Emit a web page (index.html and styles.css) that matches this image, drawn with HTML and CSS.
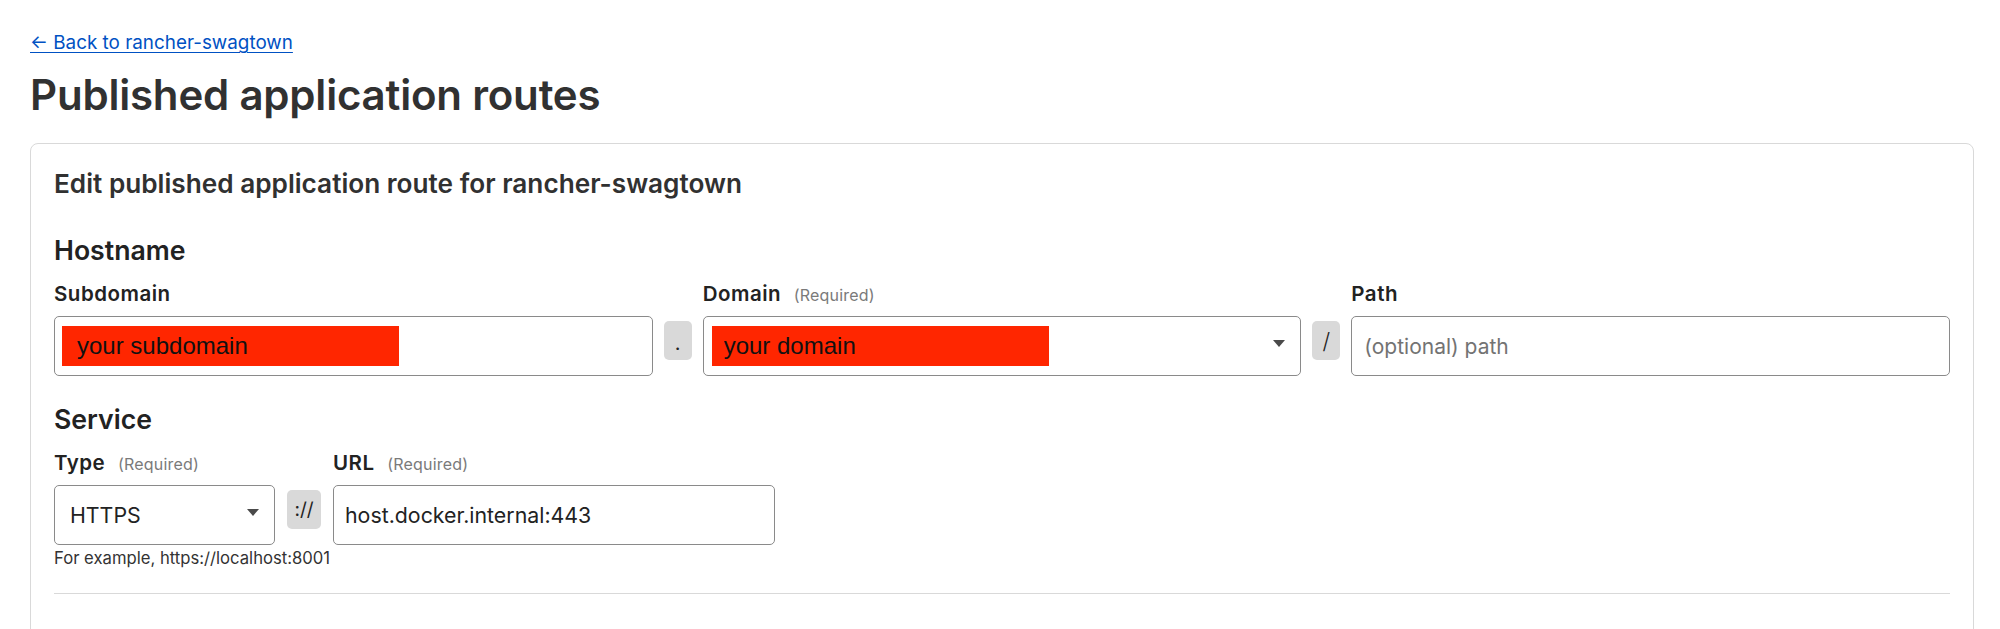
FILE: index.html
```html
<!DOCTYPE html>
<html lang="en">
<head>
<meta charset="utf-8">
<title>Published application routes</title>
<link rel="stylesheet" href="styles.css">
</head>
<body>
<div class="page">
  <a class="back" href="#">← Back to rancher-swagtown</a>
  <h1 class="page-title">Published application routes</h1>
  <section class="card">
    <h2 class="card-title">Edit published application route for rancher-swagtown</h2>

    <h3 class="section-title">Hostname</h3>
    <div class="host-grid">
      <label class="field-label c1">Subdomain</label>
      <label class="field-label c3">Domain <span class="req">(Required)</span></label>
      <label class="field-label c5">Path</label>

      <div class="input"><span class="redact">your subdomain</span></div>
      <div class="chip chip-dot">.</div>
      <div class="input select"><span class="redact redact-domain">your domain</span>
        <svg class="caret" width="12" height="7" viewBox="0 0 12 7"><path d="M0 0H12L6 7Z"/></svg>
      </div>
      <div class="chip chip-slash">/</div>
      <div class="input"><span class="placeholder">(optional) path</span></div>
    </div>

    <h3 class="section-title service">Service</h3>
    <div class="service-grid">
      <label class="field-label">Type <span class="req">(Required)</span></label>
      <span></span>
      <label class="field-label">URL <span class="req">(Required)</span></label>

      <div class="input select type-select"><span class="value">HTTPS</span>
        <svg class="caret" width="12" height="7" viewBox="0 0 12 7"><path d="M0 0H12L6 7Z"/></svg>
      </div>
      <div class="chip chip-proto">://</div>
      <div class="input url-input"><span class="value">host.docker.internal:443</span></div>
    </div>
    <p class="helper">For example, https://localhost:8001</p>
    <hr class="divider">
  </section>
</div>
</body>
</html>
```

FILE: styles.css
```css
html, body {
  margin: 0;
  padding: 0;
  background: #ffffff;
}

body {
  font-family: Inter, "Noto Sans", "Liberation Sans", sans-serif;
  color: #222222;
}

.page {
  padding: 31px 26px 0 30px;
}

.back {
  display: block;
  width: max-content;
  font-size: 18.85px;
  line-height: 24px;
  color: #0051c3;
  text-decoration: underline;
  text-underline-offset: 3px;
  text-decoration-thickness: 1px;
}

.page-title {
  margin: 13.7px 0 0 0;
  font-size: 42px;
  line-height: 52px;
  font-weight: 600;
  color: #313131;
  letter-spacing: -0.2px;
}

.card {
  margin-top: 22.3px;
  border: 1px solid #d9d9d9;
  border-radius: 8px;
  padding: 24.5px 23px 0 23px;
  min-height: 520px;
}

.card-title {
  margin: 0;
  font-size: 26.2px;
  line-height: 32px;
  font-weight: 600;
  color: #313131;
}

.section-title {
  margin: 33.3px 0 0 0;
  font-size: 26.67px;
  line-height: 32px;
  font-weight: 600;
  color: #222222;
}

.section-title.service {
  margin-top: 27px;
}

.field-label {
  display: block;
  font-size: 20.5px;
  line-height: 26px;
  font-weight: 600;
  letter-spacing: 0.5px;
  color: #222222;
}

.req {
  margin-left: 7px;
  font-size: 16px;
  font-weight: 400;
  letter-spacing: 0.2px;
  color: #7a7a7a;
}

.host-grid {
  margin-top: 14.9px;
  display: grid;
  grid-template-columns: 1fr 28px 1fr 28px 1fr;
  column-gap: 11px;
  row-gap: 8.5px;
}

.host-grid .c1 { grid-column: 1; }
.host-grid .c3 { grid-column: 3; }
.host-grid .c5 { grid-column: 5; }

.service-grid {
  margin-top: 14.5px;
  display: grid;
  grid-template-columns: 221px 34px 442px;
  column-gap: 12px;
  row-gap: 8.5px;
}

.input {
  box-sizing: border-box;
  height: 60px;
  border: 1px solid #8a8a8a;
  border-radius: 5px;
  display: flex;
  align-items: center;
  padding: 0 12px 0 7px;
  background: #ffffff;
  font-size: 21.33px;
  color: #222222;
}

.select {
  justify-content: space-between;
  padding-right: 15px;
}

.caret {
  fill: #4a4a4a;
  flex: none;
  margin-top: -5px;
}

.redact {
  display: inline-block;
  width: 337px;
  height: 40px;
  box-sizing: border-box;
  padding-left: 15px;
  background: #ff2600;
  font-family: "Liberation Sans", Arial, sans-serif;
  font-size: 24px;
  line-height: 40px;
  color: #111111;
}

.redact-domain {
  margin-left: 1px;
  padding-left: 12px;
}

.placeholder {
  padding-left: 5px;
  font-size: 21px;
  color: #737373;
}

.type-select {
  padding-left: 15px;
}

.url-input {
  padding-left: 11px;
}

.chip {
  align-self: start;
  margin-top: 5px;
  height: 39px;
  border-radius: 5px;
  background: #d9d9d9;
  display: flex;
  align-items: center;
  justify-content: center;
  color: #222222;
}

.chip-dot {
  font-size: 20px;
  padding-top: 4px;
  box-sizing: border-box;
}

.chip-slash {
  font-size: 22px;
  font-weight: 300;
}

.chip-proto {
  font-size: 19px;
  font-weight: 400;
}

.helper {
  margin: 3px 0 0 0;
  font-size: 16.67px;
  line-height: 20px;
  color: #333333;
}

.divider {
  margin: 25px 0 0 0;
  border: 0;
  border-top: 1px solid #d9d9d9;
  height: 0;
}
```
